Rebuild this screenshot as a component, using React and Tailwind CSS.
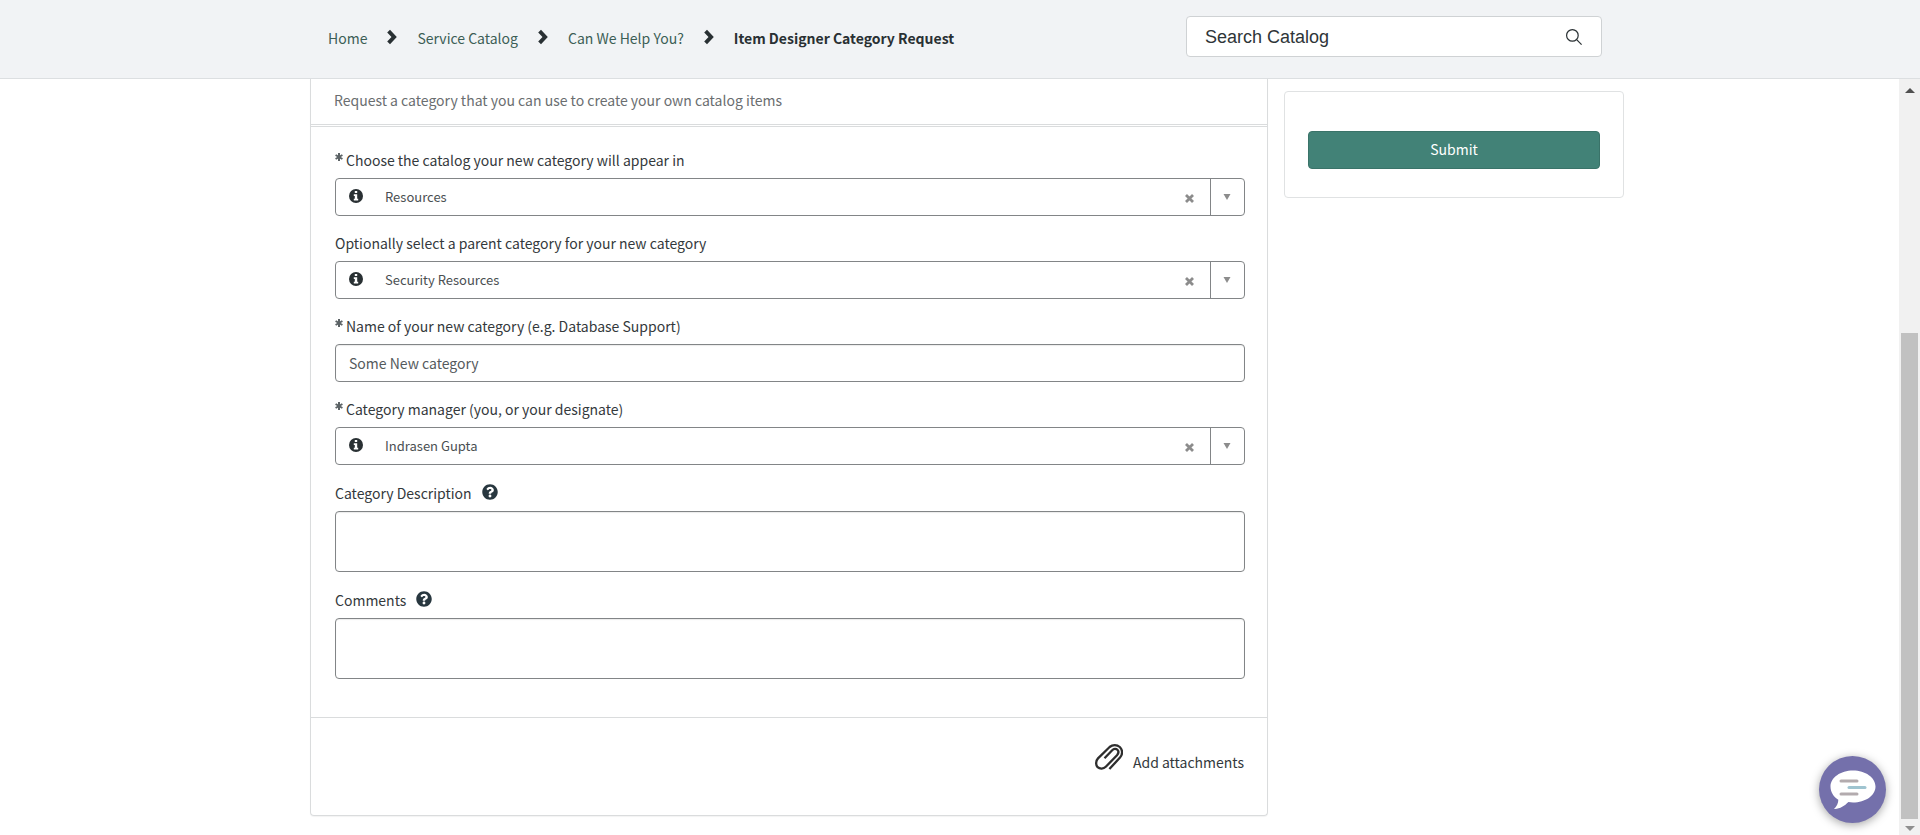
import React, { useState } from 'react';
import { FaQuestionCircle } from 'react-icons/fa';

const breadcrumbs = ['Home', 'Service Catalog', 'Can We Help You?'];

const Chevron = () => (
  <svg viewBox="0 0 10 16" className="w-[10px] h-4 mb-[2px]" fill="#293033" aria-hidden="true">
    <path d="M3 0.8 9.8 8 3 15.2 0.2 12.600 4.500 8 0.2 3.400z" />
  </svg>
);

const SearchIcon = () => (
  <svg viewBox="0 0 16 16" className="w-4 h-4" fill="none" stroke="#293033" strokeWidth="1.2" aria-hidden="true">
    <circle cx="6.4" cy="6.4" r="5.8" />
    <path d="M10.4 10.4 15.6 15.6" />
  </svg>
);

const InfoIcon = () => (
  <svg viewBox="0 0 14 14" className="w-[14px] h-[14px]" aria-hidden="true">
    <circle cx="7" cy="7" r="7" fill="#293033" />
    <path fill="#fff" d="M5.800 2h2.400v2H5.800zM4.800 5.200h3.400v4.500h1v1.700H4.800V9.700h1V6.900h-1z" />
  </svg>
);

const RequiredMark = () => (
  <svg viewBox="0 0 8 8" className="w-2 h-2 mr-[3px] mb-[7px]" stroke="#5c6366" strokeWidth="2" aria-hidden="true">
    <path d="M4 0v8M0.600 2 7.400 6M7.400 2 0.600 6" />
  </svg>
);

const ClearIcon = () => (
  <svg viewBox="0 0 9 9" className="w-[9px] h-[9px] mt-[2px]" stroke="#8c8c8c" strokeWidth="2.8" aria-hidden="true">
    <path d="M1 1 8 8M8 1 1 8" />
  </svg>
);

const Paperclip = () => (
  <svg viewBox="0 0 28 26" className="w-7 h-[26px]" fill="none" stroke="#2e2e2e" strokeWidth="2.3" aria-hidden="true">
    <path d="M14.4 25 25 13.6C28 10.2 27.6 5.6 24.8 3 22 0.6 17.6 0.6 14.6 3L3 14.4C0.6 17 0.6 21 2.6 23.2 4.8 25.2 8.4 25.2 10.8 22.8L22 11.2C23.6 9.4 23.8 7.2 22.4 5.8 21 4.4 18.8 4.6 17.2 6.2L9.500 14.2" />
  </svg>
);

const ChatIcon = () => (
  <svg viewBox="0 0 46 40" className="w-[46px] h-10" aria-hidden="true">
    <path fill="#fff" d="M23 0.5C35.400 0.500 45.500 7.500 45.500 16.500S35.400 32.500 23 32.500c-1.600 0-3.200-.1-4.600-.4C14.500 36 9.500 39.400 4 39c2.600-2.600 4.400-5.600 4.300-9.200C3.500 26.900 0.500 22 0.500 16.500 0.500 7.500 10.600 0.500 23 0.500z" />
    <path stroke="#b3abae" strokeWidth="3" strokeLinecap="round" d="M11 11h16M11 24h16" />
    <path stroke="#9fc4d0" strokeWidth="3" strokeLinecap="round" d="M19 17.500h16" />
  </svg>
);

const Label = ({ id, required, help, children }) => (
  <div className={`flex items-center ${help ? 'h-[25px]' : 'h-6'}`}>
    {required && <RequiredMark />}
    <label htmlFor={id}>{children}</label>
    {help && (
      <button type="button" aria-label={`Help for ${children}`} className="ml-[10px] mb-[2px]">
        <FaQuestionCircle className="w-4 h-4 text-[#28373f]" />
      </button>
    )}
  </div>
);

const ReferenceField = ({ id, label, required, option }) => {
  const [value, setValue] = useState(option);

  return (
    <div>
      <Label id={id} required={required}>{label}</Label>
      <div className="mt-[6px] h-[38px] flex items-stretch border border-[#828587] rounded">
        <button type="button" aria-label={`Show details of ${label}`} className="w-10 pb-[3px] flex items-center justify-center">
          <InfoIcon />
        </button>
        <select
          id={id}
          value={value}
          onChange={(e) => setValue(e.target.value)}
          className="flex-1 min-w-0 appearance-none bg-transparent pl-[9px] text-[13px] text-[#4a4f52] outline-none"
        >
          <option value=""></option>
          <option value={option}>{option}</option>
        </select>
        <button type="button" aria-label={`Clear ${label}`} onClick={() => setValue('')} className="w-[42px] flex items-center justify-center">
          <ClearIcon />
        </button>
        <span className="w-[34px] pr-[1px] border-l border-[#828587] flex items-center justify-center">
          <svg viewBox="0 0 8 6" className="w-2 h-[6px]" fill="#8c8c8c" aria-hidden="true">
            <path d="M0.500 0h7L4 6z" />
          </svg>
        </span>
      </div>
    </div>
  );
};

const TextAreaField = ({ id, label }) => (
  <div>
    <Label id={id} help>{label}</Label>
    <textarea id={id} className="mt-[6px] block w-full h-[61px] px-3 py-2 border border-[#828587] rounded resize-none shadow-[inset_0_1px_1px_rgba(0,0,0,0.08)] outline-none" />
  </div>
);

const Header = () => (
  <header className="h-[79px] bg-[#f1f3f5] border-b border-[#dcdfe1] pl-[26px] pr-4">
    <div className="max-w-[1274px] mx-auto flex justify-between pt-4">
      <nav aria-label="Breadcrumb" className="pt-[10px]">
        <ol className="flex items-center h-6">
          {breadcrumbs.map((crumb) => (
            <li key={crumb} className="flex items-center">
              <a href="#" className="text-[#3c5e55]">{crumb}</a>
              <span className="w-[50px] flex justify-center"><Chevron /></span>
            </li>
          ))}
          <li className="font-bold text-[#293033]" aria-current="page">Item Designer Category Request</li>
        </ol>
      </nav>
      <form onSubmit={(e) => e.preventDefault()} className="w-[416px] h-[41px] flex items-center bg-white border border-[#cfd2d4] rounded">
        <input
          type="text"
          aria-label="Search Catalog"
          placeholder="Search Catalog"
          className="flex-1 min-w-0 pl-[18px] text-[18px] font-['Liberation_Sans',Arial,sans-serif] placeholder:text-[#2e3538] outline-none"
        />
        <button type="submit" aria-label="Search" className="mr-[19px]"><SearchIcon /></button>
      </form>
    </div>
  </header>
);

const Scrollbar = () => (
  <div className="w-[21px] shrink-0 bg-[#f1f1f1] flex flex-col items-center" aria-hidden="true">
    <svg viewBox="0 0 10 5" className="mt-[9px] w-[10px] h-[5px]" fill="#505050"><path d="M5 0 10 5H0z" /></svg>
    <div className="mt-auto w-[17px] h-[486px] bg-[#c1c1c1]"></div>
    <svg viewBox="0 0 10 5" className="mt-[7px] mb-1 w-[10px] h-[5px]" fill="#8e8e8e"><path d="M0 0H10L5 5z" /></svg>
  </div>
);

const App = () => {
  const [name, setName] = useState('Some New category');

  return (
    <div className="min-h-screen flex flex-col bg-white text-[#34393c] text-[14px] leading-6 font-['Noto_Sans_CJK_SC','Open_Sans',sans-serif]">
      <Header />

      <div className="flex-1 flex">
        <main className="flex-1 pl-[35px]">
          <div className="max-w-[1314px] mx-auto flex items-start gap-4">
            {/* Request form */}
            <section className="flex-1 min-w-0 border border-t-0 border-[#dadcdd] rounded-b shadow-[0_1px_1px_rgba(0,0,0,0.05)]">
              <p className="h-[46px] pt-[9px] pl-[23px] border-b border-[#dadcdd] text-[#6a6e70]">
                Request a category that you can use to create your own catalog items
              </p>
              <div className="mt-[1px] border-t border-[#dadcdd] pt-[21px] pl-6 pr-[22px] pb-[38px] flex flex-col gap-[15px]">
                <ReferenceField id="catalog" label="Choose the catalog your new category will appear in" required option="Resources" />
                <ReferenceField id="parent" label="Optionally select a parent category for your new category" option="Security Resources" />
                <div>
                  <Label id="name" required>Name of your new category (e.g. Database Support)</Label>
                  <input
                    id="name"
                    type="text"
                    value={name}
                    onChange={(e) => setName(e.target.value)}
                    className="mt-[6px] block w-full h-[38px] px-[13px] border border-[#828587] rounded text-[#555a5d] shadow-[inset_0_1px_1px_rgba(0,0,0,0.08)] outline-none"
                  />
                </div>
                <ReferenceField id="manager" label="Category manager (you, or your designate)" required option="Indrasen Gupta" />
                <TextAreaField id="description" label="Category Description" />
                <TextAreaField id="comments" label="Comments" />
              </div>
              <div className="h-[98px] border-t border-[#dadcdd] pt-[26px] pr-[23px] flex justify-end items-start">
                <button type="button" className="flex items-start gap-[10px]">
                  <Paperclip />
                  <span className="pt-[6px]">Add attachments</span>
                </button>
              </div>
            </section>

            {/* Submit card */}
            <aside className="mt-3 w-[340px] h-[107px] shrink-0 border border-[#e0e2e3] rounded pt-[39px] px-[23px]">
              <button type="button" className="w-full h-[38px] pb-[2px] bg-[#428277] border border-[#3a7369] rounded text-white">
                Submit
              </button>
            </aside>
          </div>
        </main>
        <Scrollbar />
      </div>

      <button
        type="button"
        aria-label="Open chat"
        className="fixed right-[34px] bottom-3 w-[67px] h-[67px] rounded-full bg-[#7470ab] shadow-[0_2px_10px_rgba(0,0,0,0.35)] flex items-center justify-center"
      >
        <ChatIcon />
      </button>
    </div>
  );
};

export default App;
